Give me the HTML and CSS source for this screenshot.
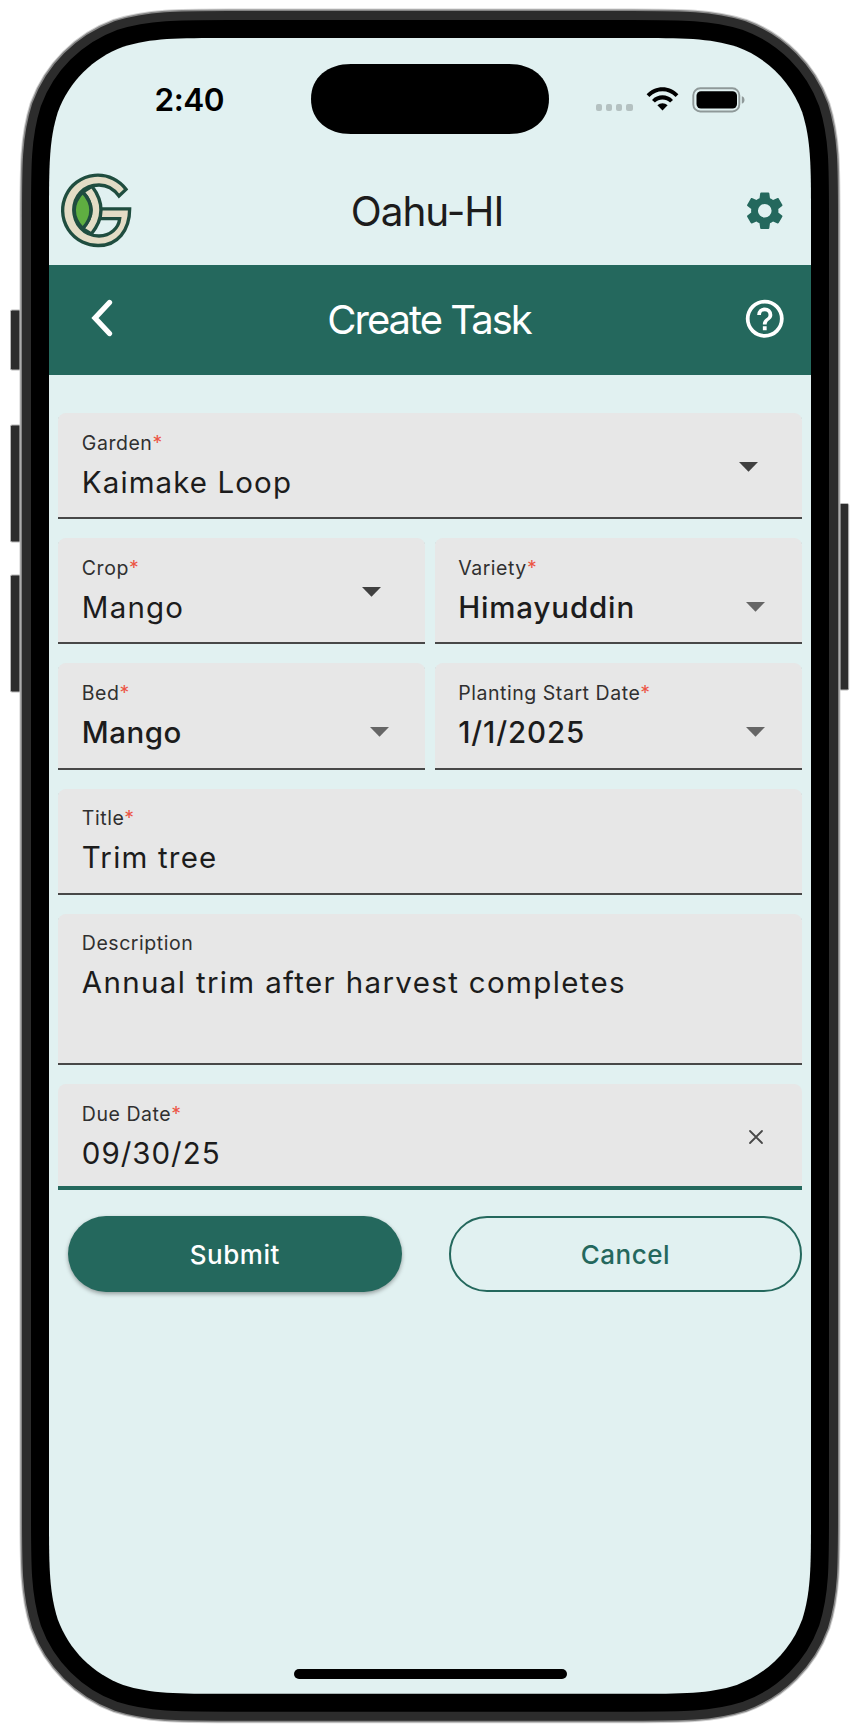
FILE: index.html
```html
<!DOCTYPE html>
<html lang="en">
<head>
<meta charset="utf-8">
<title>Create Task</title>
<link rel="stylesheet" href="styles.css">
</head>
<body>
<div class="device">
  <svg class="frame" width="862" height="1728" viewBox="0 0 862 1728" aria-hidden="true">
    <defs>
      <path id="screen-shape" d="M228.6 38H631.4C683.1 38 709 38 736.8 46.8C767.2 57.9 791.1 81.8 802.2 112.2C811 140 811 165.9 811 217.6V1514.1C811 1565.8 811 1591.7 802.2 1619.5C791.1 1649.9 767.2 1673.8 736.8 1684.9C709 1693.7 683.1 1693.7 631.4 1693.7H228.6C176.9 1693.7 151 1693.7 123.2 1684.9C92.8 1673.8 68.9 1649.9 57.8 1619.5C49 1591.7 49 1565.8 49 1514.1V217.6C49 165.9 49 140 57.8 112.2C68.9 81.8 92.8 57.9 123.2 46.8C151 38 176.9 38 228.6 38Z"/>
    </defs>
    <g class="side-keys">
      <rect x="10.5" y="310" width="14" height="60" rx="1.5"/>
      <rect x="10.5" y="425" width="14" height="117" rx="1.5"/>
      <rect x="10.5" y="575" width="14" height="117" rx="1.5"/>
      <rect x="836" y="503.5" width="12.7" height="186.5" rx="1.5"/>
    </g>
    <use href="#screen-shape" class="rim-light"/>
    <use href="#screen-shape" class="rim-dark"/>
    <use href="#screen-shape" class="band"/>
    <use href="#screen-shape" class="bezel"/>
    <use href="#screen-shape" class="glass"/>
  </svg>

  <main class="screen">
    <div class="status">
      <div class="time">2:40</div>
      <svg class="island" width="240" height="72" viewBox="0 0 240 72"><path d="M41 1H199C222 1 239 14 239 36S222 71 199 71H41C18 71 1 58 1 36S18 1 41 1Z"/></svg>
      <div class="indicators">
        <div class="dots"><i></i><i></i><i></i><i></i></div>
        <svg class="wifi" width="33" height="24" viewBox="0 0 33 24">
          <path d="M.6 7.3C9.2-2.2 23.8-2.2 32.4 7.3L29.6 10C22.4 2.4 10.600 2.4 3.4 10Z"/>
          <path d="M6 12.900C11.600 6.700 21.400 6.700 27 12.900L24.100 15.600C20.100 11.300 12.900 11.300 8.900 15.600Z"/>
          <path d="M11.400 18.300C14.200 15.400 18.800 15.400 21.600 18.300L16.500 23.500Z"/>
        </svg>
        <svg class="battery" width="54" height="26" viewBox="0 0 54 26">
          <rect class="shell" x="1.300" y="1.300" width="46" height="23.200" rx="7"/>
          <rect x="4.500" y="4.200" width="40.500" height="17.300" rx="4.500"/>
          <path class="nub" d="M49.800 9.200Q52.500 10 52.500 12.900T49.800 16.600Z"/>
        </svg>
      </div>
    </div>

    <header class="site-bar">
      <svg class="logo" width="100" height="100" viewBox="0 0 300 300">
        <path class="tan" d="M228 88A105.500 105.500 0 1 0 146 256.500C202 256.500 239 212 239 146.500H150V176H209C206 204 182 228 147 228C100 228 71.500 190 71.500 150S100 75 147 75C171 75 190 85 207 108Z"/>
        <path class="tan" d="M98 96Q148 150 98 206L124 222Q181 152 126 79Z"/>
        <path class="leaf" d="M98 96Q148 150 98 206Q47 150 98 96Z"/>
      </svg>
      <h1 class="site-name">Oahu-HI</h1>
      <svg class="gear" width="45.500" height="45.500" viewBox="0 0 24 24"><path d="M19.140 12.940c.04-.3.06-.61.06-.94 0-.32-.02-.64-.07-.94l2.030-1.580c.18-.14.23-.41.12-.61l-1.920-3.320c-.12-.22-.37-.29-.59-.22l-2.390.96c-.5-.38-1.030-.7-1.620-.94l-.36-2.540c-.04-.24-.24-.41-.48-.41h-3.840c-.24 0-.43.17-.47.41l-.36 2.540c-.59.24-1.130.57-1.620.94l-2.390-.96c-.22-.08-.47 0-.59.22L2.740 8.870c-.12.21-.08.47.12.61l2.030 1.580c-.05.3-.09.63-.09.94s.02.64.07.94l-2.030 1.580c-.18.14-.23.41-.12.61l1.920 3.320c.12.22.37.29.59.22l2.390-.96c.5.38 1.030.7 1.620.94l.36 2.540c.05.24.24.41.48.41h3.840c.24 0 .44-.17.47-.41l.36-2.540c.59-.24 1.130-.56 1.620-.94l2.390.96c.22.08.47 0 .59-.22l1.920-3.320c.12-.22.07-.47-.12-.61zM12 15.600a3.600 3.600 0 1 1 0-7.200 3.600 3.600 0 0 1 0 7.200z"/></svg>
    </header>

    <div class="page-bar">
      <svg class="back" width="24" height="40" viewBox="0 0 24 40"><path d="M19.500 4.500L5 20L19.500 35.500"/></svg>
      <h2 class="page-name">Create Task</h2>
      <svg class="help" width="45.500" height="45.500" viewBox="0 0 24 24"><path d="M11 18h2v-2h-2zM12 2a10 10 0 1 0 0 20 10 10 0 0 0 0-20zm0 18a8 8 0 1 1 0-16 8 8 0 0 1 0 16zm0-14a4 4 0 0 0-4 4h2a2 2 0 1 1 4 0c0 2-3 1.750-3 5h2c0-2.250 3-2.500 3-5a4 4 0 0 0-4-4z"/></svg>
    </div>

    <form class="form">
      <div class="field">
        <div class="text"><span class="label">Garden<b>*</b></span><span class="value garden">Kaimake Loop</span></div>
        <svg class="caret wide" width="19" height="10" viewBox="0 0 19 10"><path d="M0 0H19L9.500 9.800Z"/></svg>
      </div>
      <div class="pair">
        <div class="field">
          <div class="text"><span class="label">Crop<b>*</b></span><span class="value">Mango</span></div>
          <svg class="caret wide" width="19" height="10" viewBox="0 0 19 10"><path d="M0 0H19L9.500 9.800Z"/></svg>
        </div>
        <div class="field">
          <div class="text"><span class="label">Variety<b>*</b></span><span class="value strong variety">Himayuddin</span></div>
          <svg class="caret low" width="19" height="10" viewBox="0 0 19 10"><path d="M0 0H19L9.500 9.800Z"/></svg>
        </div>
      </div>
      <div class="pair">
        <div class="field">
          <div class="text"><span class="label">Bed<b>*</b></span><span class="value strong">Mango</span></div>
          <svg class="caret low" width="19" height="10" viewBox="0 0 19 10"><path d="M0 0H19L9.500 9.800Z"/></svg>
        </div>
        <div class="field">
          <div class="text"><span class="label">Planting Start Date<b>*</b></span><span class="value strong date">1/1/2025</span></div>
          <svg class="caret low" width="19" height="10" viewBox="0 0 19 10"><path d="M0 0H19L9.500 9.800Z"/></svg>
        </div>
      </div>
      <div class="field">
        <div class="text"><span class="label">Title<b>*</b></span><span class="value">Trim tree</span></div>
      </div>
      <div class="field tall">
        <div class="text"><span class="label">Description</span><span class="value note">Annual trim after harvest completes</span></div>
      </div>
      <div class="field focused">
        <div class="text"><span class="label">Due Date<b>*</b></span><span class="value due">09/30/25</span></div>
        <svg class="clear" width="16" height="16" viewBox="0 0 16 16"><path d="M2 2L14 14M14 2L2 14"/></svg>
      </div>
      <div class="actions">
        <button type="button" class="submit">Submit</button>
        <button type="button" class="cancel">Cancel</button>
      </div>
    </form>
    <div class="home"></div>
  </main>
</div>
</body>
</html>
```
FILE: styles.css
```css
* { box-sizing: border-box; }
body { margin: 0; background: #fff; font-family: Inter, "Liberation Sans", sans-serif; color: #1c1c1c; }
svg { display: block; flex: none; }

.device { position: relative; width: 862px; height: 1728px; padding: 38px 51px 34px 49px; overflow: hidden; }
.frame { position: absolute; left: 0; top: 0; }
.frame use { fill: none; }
.frame .rim-light { stroke: #d2d2d2; stroke-width: 59px; }
.frame .rim-dark { stroke: #858585; stroke-width: 57px; }
.frame .band { stroke: #2c2c2c; stroke-width: 54px; }
.frame .bezel { stroke: #000; stroke-width: 36px; }
.frame .glass { fill: #e1f1f1; }
.side-keys rect { fill: #2c2c2c; stroke: #b8b8b8; stroke-width: 1px; }

.screen { position: relative; height: 1656px; display: flex; flex-direction: column; }

.status { height: 122px; display: grid; grid-template-columns: 261px 240px 1fr; align-items: start; padding-top: 25px; }
.time { padding: 17px 0 0 105.500px; font-size: 31.500px; line-height: 40px; font-weight: 600; letter-spacing: -.5px; color: #000; }
.indicators { display: flex; padding-top: 24px; }
.dots { display: flex; gap: 3.700px; padding: 17px 0 0 45.500px; width: 96px; }
.dots i { width: 6.500px; height: 6.500px; border-radius: 2px; background: #b4c1c1; flex: none; }
.wifi { margin: 0 13px 0 0; }
.battery .shell { fill: none; stroke: #8f9999; stroke-width: 1.900px; }
.battery .nub { fill: #8f9999; }

.site-bar { height: 105px; display: grid; grid-template-columns: 100px 1fr 100px; align-items: center; }
.logo { margin: 0 0 5px 1px; align-self: end; }
.logo path { stroke: #1f4d3f; stroke-width: 10px; stroke-linejoin: miter; }
.logo .tan { fill: #e3dcc5; }
.logo .leaf { fill: #5fae41; }
h1, h2 { margin: 0; font-weight: 400; text-align: center; white-space: nowrap; }
.site-name { font-size: 40.500px; line-height: 50px; letter-spacing: -1px; padding: 0 6px 2px 0; }
.gear { fill: #24685d; justify-self: start; margin: -3px 0 0 31px; }

.page-bar { height: 110px; background: #24685d; display: grid; grid-template-columns: 100px 1fr 100px; align-items: center; }
.back { margin: -4px 0 0 41px; fill: none; stroke: #fff; stroke-width: 5.300px; stroke-linecap: round; }
.page-name { color: #fff; font-size: 40px; line-height: 50px; letter-spacing: -2px; padding: 0 2px 1px 0; }
.help { fill: #fff; justify-self: start; margin: -3px 0 0 31px; }

.form { padding: 38.300px 9.300px 0; display: flex; flex-direction: column; gap: 19px; }
.pair { display: grid; grid-template-columns: 1fr 1fr; gap: 9.300px; }
.field { height: 106.100px; background: #e7e7e7; border-radius: 8px 8px 0 0; box-shadow: inset 0 -2px #484848; padding: 0 36.500px 0 23.500px; display: flex; justify-content: space-between; }
.field.tall { height: 151.500px; }
.field.focused { box-shadow: inset 0 -4px #24685d; }
.text { padding-top: 15.700px; display: flex; flex-direction: column; white-space: nowrap; }
.label { font-size: 19.500px; line-height: 28px; letter-spacing: .550px; color: #303030; }
.label b { font-weight: 400; color: #ec5545; }
.value { font-size: 29.500px; line-height: 40px; margin-top: 5px; letter-spacing: 1.200px; }
.value.garden { letter-spacing: 1.100px; }
.value.note { letter-spacing: 1.350px; }
.value.due { letter-spacing: .980px; }
.value.strong { font-weight: 500; letter-spacing: .5px; }
.value.variety { letter-spacing: .860px; }
.value.date { letter-spacing: .880px; }
.caret { margin-top: 64px; fill: #666; }
.caret.wide { margin: 49px 7.500px 0 0; fill: #404040; }
.clear { margin: 45px 1.500px 0 0; fill: none; stroke: #484848; stroke-width: 1.800px; stroke-linecap: round; }

.actions { display: grid; grid-template-columns: 334px 352.700px; justify-content: space-between; padding: 7.200px 0 0 9.500px; }
.actions button { height: 76px; border-radius: 38px; font: 500 26px/36px Inter, sans-serif; letter-spacing: .5px; padding: 2px 0 0; }
.submit { border: 0; background: #24685d; color: #fff; box-shadow: 0 2px 4px rgba(0,0,0,.35); }
.cancel { border: 2px solid #24685d; background: none; color: #24685d; }

.home { width: 273px; height: 10px; border-radius: 5px; background: #000; margin: auto auto 15.500px 244.500px; }
```
